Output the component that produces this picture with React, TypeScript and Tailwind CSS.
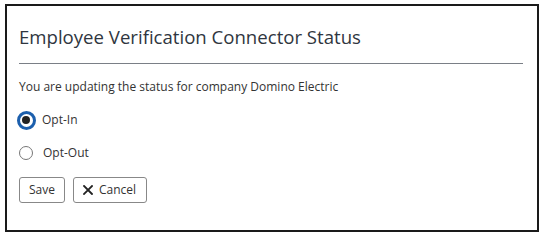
export default function App() {
  return (
    <div className="w-[544px] h-[237px] bg-white pt-[4px] pl-[5px] font-['Open_Sans',sans-serif] text-[#333]">
      <div className="w-[534px] h-[228px] border-2 border-[#1a1a1a] pl-3 pr-[14px] pt-[19px]">
        <h2 className="text-[18.6px] leading-[24px] text-[#2f3640]">Employee Verification Connector Status</h2>
        <hr className="mt-[14px] border-0 h-px bg-[#7a7f86]" />
        <p className="mt-[14px] text-[12px] leading-[18px]">
          You are updating the status for company Domino Electric
        </p>
        <div className="mt-[14px] flex flex-col gap-[13px]">
          <label className="flex items-center h-[20px] text-[12px] -ml-[3px]">
            <span className="w-[20px] flex justify-center">
              <span className="w-[19px] h-[19px] rounded-full border-[3px] border-[#1c5fad] flex items-center justify-center">
                <span className="w-[8px] h-[8px] rounded-full bg-[#222]" />
              </span>
            </span>
            <span className="ml-[6px]">Opt-In</span>
          </label>
          <label className="flex items-center h-[20px] text-[12px] -ml-[3px]">
            <span className="w-[20px] flex justify-center">
              <span className="w-[14px] h-[14px] rounded-full border border-[#777]" />
            </span>
            <span className="ml-[7px]">Opt-Out</span>
          </label>
        </div>
        <div className="mt-[14px] flex gap-[8px]">
          <button className="h-[26px] w-[46px] border border-[#888] rounded-[3px] text-[12px] text-[#333] bg-white">
            Save
          </button>
          <button className="h-[26px] w-[74px] pl-[9px] border border-[#888] rounded-[3px] text-[12px] text-[#333] bg-white flex items-center gap-[6px]">
            <svg width="10" height="10" viewBox="0 0 10 10" fill="none">
              <path d="M1 1L9 9M9 1L1 9" stroke="#222" strokeWidth="1.8" strokeLinecap="square" />
            </svg>
            Cancel
          </button>
        </div>
      </div>
    </div>
  );
}
